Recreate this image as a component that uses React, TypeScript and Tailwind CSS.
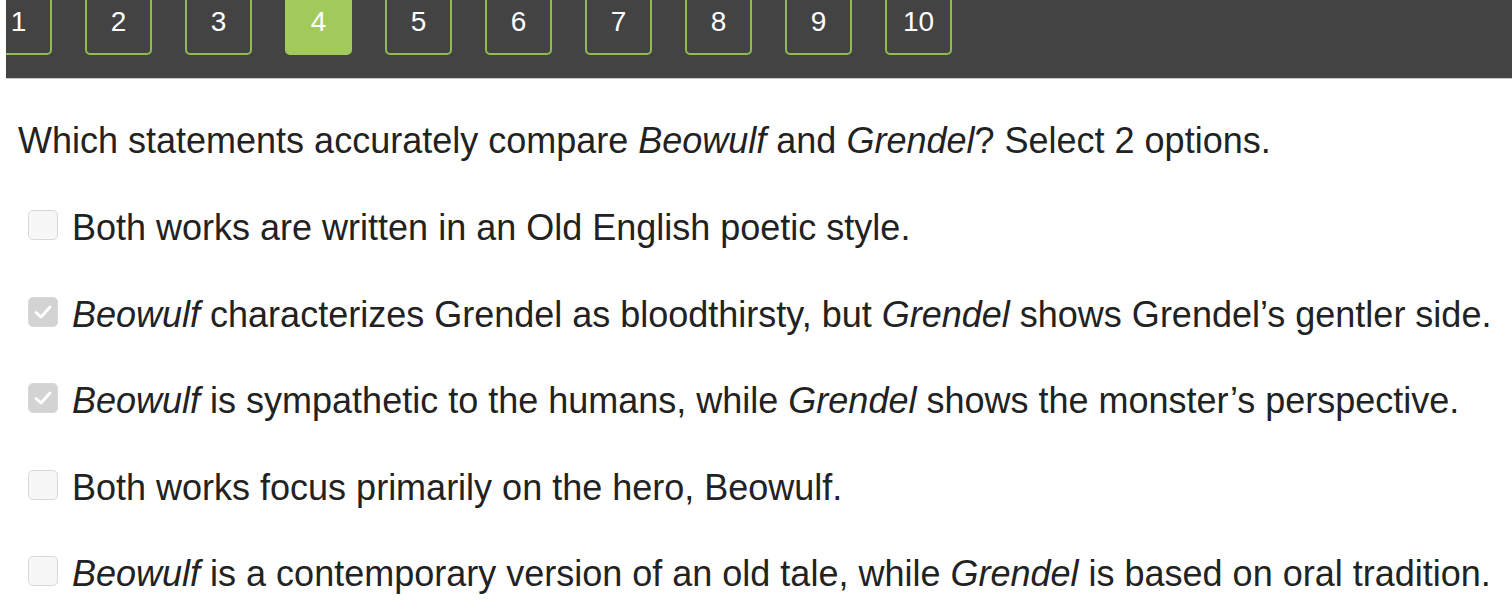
const pages = [1, 2, 3, 4, 5, 6, 7, 8, 9, 10]
const current = 4

type Option = { parts: { text: string; italic?: boolean }[]; checked: boolean }

const options: Option[] = [
  { parts: [{ text: 'Both works are written in an Old English poetic style.' }], checked: false },
  {
    parts: [
      { text: 'Beowulf', italic: true },
      { text: ' characterizes Grendel as bloodthirsty, but ' },
      { text: 'Grendel', italic: true },
      { text: ' shows Grendel\u2019s gentler side.' },
    ],
    checked: true,
  },
  {
    parts: [
      { text: 'Beowulf', italic: true },
      { text: ' is sympathetic to the humans, while ' },
      { text: 'Grendel', italic: true },
      { text: ' shows the monster\u2019s perspective.' },
    ],
    checked: true,
  },
  { parts: [{ text: 'Both works focus primarily on the hero, Beowulf.' }], checked: false },
  {
    parts: [
      { text: 'Beowulf', italic: true },
      { text: ' is a contemporary version of an old tale, while ' },
      { text: 'Grendel', italic: true },
      { text: ' is based on oral tradition.' },
    ],
    checked: false,
  },
]

const Checkbox = ({ checked }: { checked: boolean }) => (
  <div
    className={`w-[30px] h-[30px] shrink-0 rounded-[5px] border border-[#d8d8d8] flex items-center justify-center ${
      checked ? 'bg-[#d3d3d3]' : 'bg-[#f7f7f7]'
    }`}
  >
    {checked && (
      <svg width="22" height="22" viewBox="0 0 22 22" fill="none">
        <polyline points="4,11.5 9,16 18,6" stroke="white" strokeWidth="3" strokeLinecap="round" strokeLinejoin="round" />
      </svg>
    )}
  </div>
)

const App = () => {
  return (
    <div className="w-[1512px] h-[610px] overflow-hidden bg-white font-['Liberation_Sans',Arial,sans-serif] text-[#222]">
      {/* question navigator */}
      <div className="ml-[6px] h-[79px] bg-[#434343] border-b border-[#c9c9c9] overflow-hidden">
        <div className="flex gap-[33px] -ml-[21px]">
          {pages.map((n) => (
            <div
              key={n}
              className={`-mt-[13px] w-[67px] h-[68px] shrink-0 rounded-[5px] border-2 flex items-center justify-center pt-[1px] text-white text-[28px] ${
                n === current ? 'bg-[#a2c95c] border-[#a2c95c]' : 'border-[#8fbb52]'
              }`}
            >
              {n}
            </div>
          ))}
        </div>
      </div>

      <div className="pl-[18px]">
        <p className="mt-[42px] text-[36px] leading-[40px]">
          Which statements accurately compare <i>Beowulf</i> and <i>Grendel</i>? Select 2 options.
        </p>
        <div className="mt-[21px] flex flex-col pl-[10px]">
          {options.map((o, i) => (
            <div key={i} className="h-[86.5px] flex items-center gap-[14px]">
              <Checkbox checked={o.checked} />
              <span className="text-[36px] leading-[40px] pt-[6px] whitespace-nowrap">
                {o.parts.map((p, j) => (p.italic ? <i key={j}>{p.text}</i> : <span key={j}>{p.text}</span>))}
              </span>
            </div>
          ))}
        </div>
      </div>
    </div>
  )
}

export default App
